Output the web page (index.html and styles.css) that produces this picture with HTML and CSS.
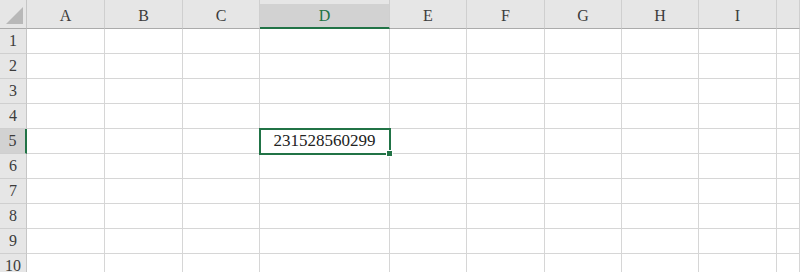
FILE: index.html
```html
<!DOCTYPE html>
<html lang="en">
<head>
  <meta charset="UTF-8">
  <title>Sheet1</title>
  <link rel="stylesheet" href="styles.css">
</head>
<body>
  <div class="sheet">
    <div class="corner">
      <svg width="18" height="18" viewBox="0 0 18 18"><polygon points="17,0 17,17 0,17" fill="#b8b8b8"/></svg>
    </div>
    <div class="col-head">A</div>
    <div class="col-head">B</div>
    <div class="col-head">C</div>
    <div class="col-head active">D</div>
    <div class="col-head">E</div>
    <div class="col-head">F</div>
    <div class="col-head">G</div>
    <div class="col-head">H</div>
    <div class="col-head">I</div>
    <div class="col-head"></div>
  </div>
  <script>
    // build the rows of the grid
    const sheet = document.querySelector('.sheet');
    for (let r = 1; r <= 10; r++) {
      const head = document.createElement('div');
      head.className = 'row-head' + (r === 5 ? ' active' : '');
      head.textContent = r;
      sheet.appendChild(head);
      for (let c = 0; c < 10; c++) {
        const cell = document.createElement('div');
        cell.className = 'cell';
        if (r === 5 && c === 3) {
          cell.className += ' selected';
          cell.textContent = '231528560299';
        }
        sheet.appendChild(cell);
      }
    }
  </script>
</body>
</html>
```

FILE: styles.css
```css
body {
  margin: 0;
  background: #fff;
  overflow: hidden;
  font-family: "Liberation Serif", "Times New Roman", serif;
}
.sheet {
  display: grid;
  grid-template-columns: 27px 78px 78px 77px 130px 77px 78px 77px 77px 78px 1fr;
  grid-template-rows: 29px repeat(10, 25px);
}
.corner {
  background: #e6e6e6;
  border-right: 1px solid #c6c6c6;
  border-bottom: 1px solid #ababab;
  box-sizing: border-box;
  display: flex;
  align-items: flex-end;
  justify-content: flex-end;
  padding: 0 2px 3px 0;
}
.corner svg {
  display: block;
}
.col-head {
  background: #e6e6e6;
  border-right: 1px solid #cfcfcf;
  border-bottom: 1px solid #ababab;
  box-sizing: border-box;
  color: #3c3c3c;
  font-size: 16px;
  display: flex;
  align-items: center;
  justify-content: center;
  padding-top: 3px;
}
.col-head.active {
  background: linear-gradient(#e6e6e6 0, #e6e6e6 4px, #d2d2d2 4px);
  color: #217346;
  border-bottom: 2px solid #217346;
  padding-top: 4px;
}
.row-head {
  background: #e6e6e6;
  border-right: 1px solid #c6c6c6;
  border-bottom: 1px solid #cfcfcf;
  box-sizing: border-box;
  color: #3c3c3c;
  font-size: 16px;
  display: flex;
  align-items: center;
  justify-content: center;
}
.row-head.active {
  background: #d2d2d2;
  border-right: 2px solid #217346;
}
.cell {
  border-right: 1px solid #d6d6d6;
  border-bottom: 1px solid #d6d6d6;
  box-sizing: border-box;
  font-size: 17px;
  color: #222;
  display: flex;
  align-items: center;
  justify-content: center;
}
.cell.selected {
  position: relative;
  outline: 2px solid #217346;
  outline-offset: -1px;
  z-index: 1;
}
.cell.selected::after {
  content: '';
  position: absolute;
  right: -4px;
  bottom: -4px;
  width: 5px;
  height: 5px;
  background: #217346;
  border: 1px solid #fff;
}
```
